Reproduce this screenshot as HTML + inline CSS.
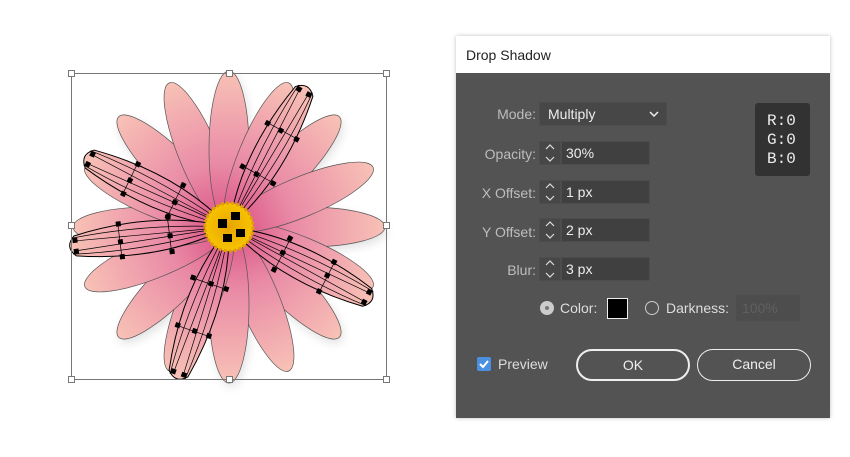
<!DOCTYPE html>
<html><head><style>
body{margin:0;width:850px;height:457px;background:#fff;position:relative;overflow:hidden;font-family:"Liberation Sans",sans-serif}
.dlg{position:absolute;left:456px;top:36px;width:374px;height:382px;background:#535353;box-shadow:0 0 4px rgba(0,0,0,.25)}
.title{position:absolute;left:0;top:0;width:374px;height:37px;background:#fff;font-size:14px;color:#222;line-height:38px;text-indent:10px}
.lbl{position:absolute;font-size:14px;color:#bdbdbd;text-align:right;width:80px}
.abs{position:absolute}
.spin{position:absolute;left:83px;width:22px;height:24px;background:#474747;border:1px solid #4d4d4d;box-sizing:border-box}
.fld{position:absolute;left:105px;width:89px;height:24px;background:#404040;border:1px solid #4d4d4d;box-sizing:border-box;color:#eee;font-size:14px;line-height:22px;padding-left:4px}
.btn{position:absolute;top:313px;height:32px;border:2px solid #eee;border-radius:16px;box-sizing:border-box;color:#eee;font-size:14px;text-align:center;line-height:28px}
</style></head><body>
<svg width="420" height="457" style="position:absolute;left:0;top:0">
<defs>
<linearGradient id="pg" x1="0" x2="1" y1="0" y2="0"><stop offset="0" stop-color="#d94d82"/><stop offset=".4" stop-color="#e98aa6"/><stop offset="1" stop-color="#f8c2b6"/></linearGradient>
<radialGradient id="cg"><stop offset="0" stop-color="#e8a400"/><stop offset="1" stop-color="#f7c400"/></radialGradient>
<filter id="sh" x="-50%" y="-50%" width="200%" height="200%"><feGaussianBlur stdDeviation="5"/></filter>
<g id="mp"><path d="M0,0 Q70,-26 155,-10 Q166,0 155,10 Q70,26 0,0Z" fill="url(#pg)" stroke="#000" stroke-width="1"/><path d="M0,0 L155,-5 M0,0 L155,5 M0,0 Q80,-14 158,-8 M0,0 Q80,14 158,8 M60,-18 L60,18 M110,-17 L110,17" stroke="#000" stroke-width=".7" fill="none"/><g fill="#000"><rect x="57" y="-20" width="5" height="5"/><rect x="57" y="15" width="5" height="5"/><rect x="57" y="-4" width="5" height="5"/><rect x="107" y="-19" width="5" height="5"/><rect x="107" y="14" width="5" height="5"/><rect x="107" y="-4" width="5" height="5"/><rect x="152" y="-8" width="5" height="5"/><rect x="152" y="3" width="5" height="5"/></g></g>
</defs>
<g transform="translate(229,227)">
<g fill="#000" opacity=".12" filter="url(#sh)" transform="translate(2,4)">
<circle r="60"/>
<ellipse cx="78" cy="0" rx="78" ry="20" transform="rotate(0)"/><ellipse cx="78" cy="0" rx="78" ry="20" transform="rotate(45)"/><ellipse cx="78" cy="0" rx="78" ry="20" transform="rotate(90)"/><ellipse cx="78" cy="0" rx="78" ry="20" transform="rotate(135)"/><ellipse cx="78" cy="0" rx="78" ry="20" transform="rotate(180)"/><ellipse cx="78" cy="0" rx="78" ry="20" transform="rotate(225)"/><ellipse cx="78" cy="0" rx="78" ry="20" transform="rotate(270)"/><ellipse cx="78" cy="0" rx="78" ry="20" transform="rotate(315)"/>
</g>
<g stroke="#555" stroke-width=".7" fill="url(#pg)">
<ellipse cx="78" cy="0" rx="78" ry="20" transform="rotate(0)"/>
<ellipse cx="78" cy="0" rx="78" ry="20" transform="rotate(22.5)"/>
<ellipse cx="78" cy="0" rx="78" ry="20" transform="rotate(45)"/>
<ellipse cx="78" cy="0" rx="78" ry="20" transform="rotate(67.5)"/>
<ellipse cx="78" cy="0" rx="78" ry="20" transform="rotate(90)"/>
<ellipse cx="78" cy="0" rx="78" ry="20" transform="rotate(112.5)"/>
<ellipse cx="78" cy="0" rx="78" ry="20" transform="rotate(135)"/>
<ellipse cx="78" cy="0" rx="78" ry="20" transform="rotate(157.5)"/>
<ellipse cx="78" cy="0" rx="78" ry="20" transform="rotate(180)"/>
<ellipse cx="78" cy="0" rx="78" ry="20" transform="rotate(202.5)"/>
<ellipse cx="78" cy="0" rx="78" ry="20" transform="rotate(225)"/>
<ellipse cx="78" cy="0" rx="78" ry="20" transform="rotate(247.5)"/>
<ellipse cx="78" cy="0" rx="78" ry="20" transform="rotate(270)"/>
<ellipse cx="78" cy="0" rx="78" ry="20" transform="rotate(292.5)"/>
<ellipse cx="78" cy="0" rx="78" ry="20" transform="rotate(315)"/>
<ellipse cx="78" cy="0" rx="78" ry="20" transform="rotate(337.5)"/>
</g>
<use href="#mp" transform="rotate(-61)"/>
<use href="#mp" transform="rotate(206)"/>
<use href="#mp" transform="rotate(173)"/>
<use href="#mp" transform="rotate(27)"/>
<use href="#mp" transform="rotate(109)"/>
<circle r="24" fill="url(#cg)" stroke="#e0a000" stroke-dasharray="3 2" stroke-width="3"/>
<g fill="#000"><rect x="-11" y="-8" width="9" height="9"/><rect x="2" y="-15" width="9" height="8"/><rect x="7" y="2" width="9" height="8"/><rect x="-6" y="7" width="9" height="8"/></g>
</g>
<g fill="none" stroke="#777" stroke-width="1">
<rect x="71.5" y="73.5" width="315" height="306"/>
</g>
<g fill="#fff" stroke="#777">
<rect x="68.5" y="70.5" width="6" height="6"/><rect x="226.5" y="70.5" width="6" height="6"/><rect x="383.5" y="70.5" width="6" height="6"/>
<rect x="68.5" y="222.5" width="6" height="6"/><rect x="383.5" y="222.5" width="6" height="6"/>
<rect x="68.5" y="376.5" width="6" height="6"/><rect x="226.5" y="376.5" width="6" height="6"/><rect x="383.5" y="376.5" width="6" height="6"/>
</g>
</svg>
<div class="dlg">
<div class="title">Drop Shadow</div>
<div class="lbl" style="left:0;top:70px">Mode:</div>
<div class="abs" style="left:83px;top:66px;width:128px;height:24px;background:#474747;border:1px solid #4d4d4d;box-sizing:border-box;color:#eee;font-size:14px;line-height:22px;padding-left:8px">Multiply<svg style="position:absolute;right:7px;top:8px" width="10" height="7"><path d="M1,1 L5,5 L9,1" stroke="#eee" stroke-width="1.5" fill="none"/></svg></div>
<div class="lbl" style="left:0;top:110px">Opacity:</div>
<div class="spin" style="top:105px"></div><div class="fld" style="top:105px">30%</div>
<div class="lbl" style="left:0;top:149px">X Offset:</div>
<div class="spin" style="top:144px"></div><div class="fld" style="top:144px">1 px</div>
<div class="lbl" style="left:0;top:188px">Y Offset:</div>
<div class="spin" style="top:182px"></div><div class="fld" style="top:182px">2 px</div>
<div class="lbl" style="left:0;top:226px">Blur:</div>
<div class="spin" style="top:221px"></div><div class="fld" style="top:221px">3 px</div>
<svg class="abs" style="left:83px;top:105px" width="22" height="140" fill="none" stroke="#ddd" stroke-width="1.2">
<path d="M7,8 L11,4 L15,8 M7,16 L11,20 L15,16"/><path d="M7,47 L11,43 L15,47 M7,55 L11,59 L15,55"/><path d="M7,85 L11,81 L15,85 M7,93 L11,97 L15,93"/><path d="M7,124 L11,120 L15,124 M7,132 L11,136 L15,132"/>
</svg>
<div class="abs" style="left:299px;top:67px;width:55px;height:73px;background:#323232;border-radius:3px;color:#eee;font-family:'Liberation Mono',monospace;font-size:16px;line-height:19px;padding:9px 0 0 12px;box-sizing:border-box">R:0<br>G:0<br>B:0</div>
<div class="abs" style="left:84px;top:265px;width:14px;height:14px;border-radius:50%;background:#ccc"></div>
<div class="abs" style="left:89px;top:270px;width:4px;height:4px;border-radius:50%;background:#777"></div>
<div class="abs" style="left:104px;top:264px;font-size:14px;color:#ddd">Color:</div>
<div class="abs" style="left:151px;top:262px;width:21px;height:21px;background:#000;border:1px solid #eee;box-sizing:border-box"></div>
<div class="abs" style="left:189px;top:265px;width:14px;height:14px;border-radius:50%;border:1.5px solid #ccc;box-sizing:border-box"></div>
<div class="abs" style="left:210px;top:264px;font-size:14px;color:#ddd">Darkness:</div>
<div class="abs" style="left:280px;top:259px;width:64px;height:26px;background:#4d4d4d;color:#606060;font-size:14px;line-height:26px;padding-left:6px;box-sizing:border-box">100%</div>
<div class="abs" style="left:21px;top:321px;width:14px;height:14px;background:#4b8fe0;border-radius:2px"></div>
<svg class="abs" style="left:21px;top:321px" width="14" height="14"><path d="M3,7 L6,10 L11,4" stroke="#fff" stroke-width="2" fill="none"/></svg>
<div class="abs" style="left:42px;top:320px;font-size:14px;color:#ddd">Preview</div>
<div class="btn" style="left:120px;width:114px">OK</div>
<div class="btn" style="left:241px;width:114px;border-width:1.5px">Cancel</div>
</div>
</body></html>
